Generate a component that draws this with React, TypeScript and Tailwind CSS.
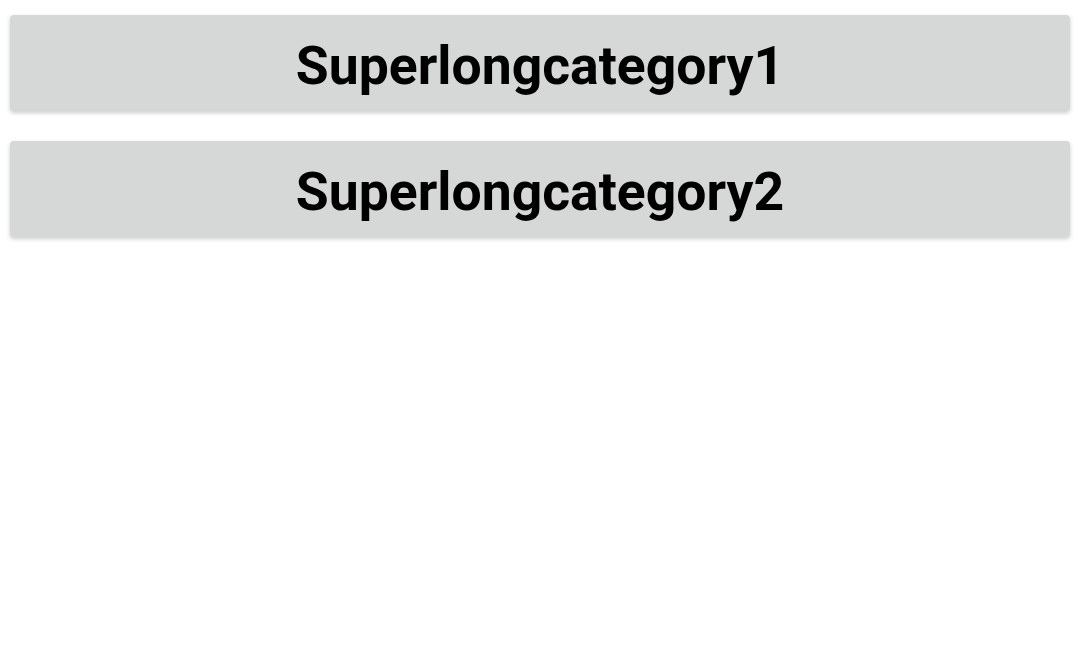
const categories = ["Superlongcategory1", "Superlongcategory2"];

export default function App() {
  return (
    <div className="min-h-screen bg-white px-[10px] pt-[15px] flex flex-col gap-[30px]" style={{ fontFamily: "Roboto, sans-serif" }}>
      {categories.map((name) => (
        <div
          key={name}
          className="h-[96px] pt-[6px] flex items-center justify-center rounded-[4px] bg-[#d6d8d7] shadow-[0_2px_4px_rgba(0,0,0,0.2)]"
        >
          <span className="text-[53.5px] font-bold text-black leading-none">{name}</span>
        </div>
      ))}
    </div>
  );
}
